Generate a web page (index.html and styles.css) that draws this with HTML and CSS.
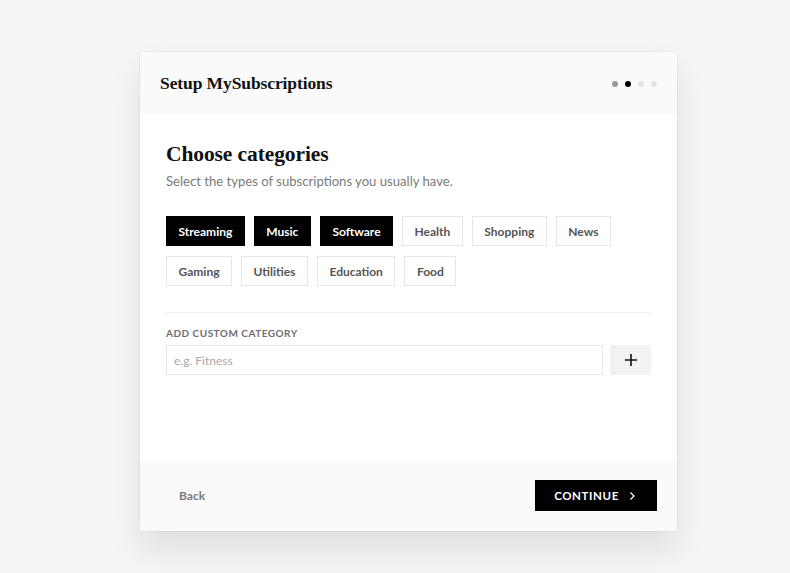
FILE: index.html
```html
<!DOCTYPE html>
<html lang="en">
<head>
<meta charset="utf-8">
<title>Setup MySubscriptions</title>
<link rel="stylesheet" href="styles.css">
</head>
<body>
<div class="card">
  <header class="card-head">
    <h1 class="brand">Setup MySubscriptions</h1>
    <div class="dots">
      <span class="dot done"></span>
      <span class="dot active"></span>
      <span class="dot"></span>
      <span class="dot"></span>
    </div>
  </header>
  <main class="card-body">
    <h2 class="title">Choose categories</h2>
    <p class="subtitle">Select the types of subscriptions you usually have.</p>
    <div class="chips">
      <button class="chip on">Streaming</button>
      <button class="chip on">Music</button>
      <button class="chip on">Software</button>
      <button class="chip">Health</button>
      <button class="chip">Shopping</button>
      <button class="chip">News</button>
      <button class="chip">Gaming</button>
      <button class="chip">Utilities</button>
      <button class="chip">Education</button>
      <button class="chip">Food</button>
    </div>
    <div class="custom">
      <label class="label" for="cat">ADD CUSTOM CATEGORY</label>
      <div class="add-row">
        <input id="cat" class="input" type="text" placeholder="e.g. Fitness">
        <button class="add" aria-label="Add">
          <svg width="14" height="14" viewBox="0 0 14 14"><path d="M7 1v12M1 7h12" stroke="#111" stroke-width="1.6" fill="none"/></svg>
        </button>
      </div>
    </div>
  </main>
  <footer class="card-foot">
    <button class="back">Back</button>
    <button class="continue">CONTINUE
      <svg width="7" height="10" viewBox="0 0 7 10"><path d="M1.5 1.5l3.5 3.5-3.5 3.5" stroke="#fff" stroke-width="1.3" fill="none"/></svg>
    </button>
  </footer>
</div>
</body>
</html>
```

FILE: styles.css
```css
* { box-sizing: border-box; }
html, body { margin: 0; padding: 0; }
body {
  background: #f5f5f5;
  font-family: "Lato", "Open Sans", sans-serif;
  color: #111;
  height: 573px;
  overflow: hidden;
}
.card {
  width: 537px;
  margin: 52px 0 0 140px;
  background: #fff;
  box-shadow: 0 18px 32px rgba(0,0,0,0.09), 0 0 0 1px rgba(0,0,0,0.04);
}
.card-head {
  height: 63px;
  background: #fafafa;
  display: flex;
  align-items: center;
  justify-content: space-between;
  padding: 0 20px;
}
.brand {
  margin: 0;
  font-family: "Liberation Serif", "DejaVu Serif", serif;
  font-weight: 700;
  font-size: 17.5px;
  letter-spacing: -0.1px;
}
.dots { display: flex; gap: 7px; }
.dot { width: 6px; height: 6px; border-radius: 50%; background: #e4e4e4; }
.dot.done { background: #9a9a9a; }
.dot.active { background: #000; }
.card-body {
  padding: 25px 26px 85px;
}
.title {
  margin: 0;
  font-family: "Liberation Serif", "DejaVu Serif", serif;
  font-weight: 700;
  font-size: 21.5px;
  line-height: 28px;
  letter-spacing: -0.1px;
}
.subtitle {
  margin: 3px 0 0;
  font-size: 13.1px;
  line-height: 20px;
  color: #7a7a7a;
}
.chips {
  margin-top: 25px;
  display: flex;
  flex-wrap: wrap;
  gap: 10px 9px;
}
.chip {
  height: 30px;
  padding: 0 11.5px;
  border: 1px solid #e6e6e6;
  background: #fff;
  color: #555;
  font-family: "Lato", "Open Sans", sans-serif;
  font-weight: 700;
  font-size: 12px;
}
.chip.on { background: #000; border-color: #000; color: #fff; }
.custom {
  margin-top: 26px;
  border-top: 1px solid #efefef;
  padding-top: 13px;
}
.label {
  display: block;
  font-size: 10px;
  font-weight: 700;
  letter-spacing: 0.5px;
  color: #6e6e6e;
  line-height: 14px;
  margin-bottom: 5px;
}
.add-row { display: flex; gap: 7px; }
.input {
  flex: 1;
  height: 30px;
  border: 1px solid #e6e6e6;
  padding: 0 7px;
  font-family: "Lato", "Open Sans", sans-serif;
  font-size: 12px;
  color: #333;
  outline: none;
}
.input::placeholder { color: #a8a8a8; }
.add {
  width: 41px;
  height: 30px;
  border: 0;
  background: #f2f2f2;
  display: flex;
  align-items: center;
  justify-content: center;
  padding: 0;
}
.card-foot {
  background: #fafafa;
  display: flex;
  justify-content: space-between;
  align-items: center;
  padding: 20px 20px 20px 26px;
}
.back {
  border: 0;
  background: transparent;
  padding: 0 13px;
  height: 31px;
  font-family: "Lato", "Open Sans", sans-serif;
  font-size: 12px;
  font-weight: 700;
  color: #7a7a7a;
}
.continue {
  width: 122px;
  height: 31px;
  border: 0;
  background: #000;
  color: #fff;
  font-family: "Lato", "Open Sans", sans-serif;
  font-size: 11.5px;
  font-weight: 700;
  letter-spacing: 0.6px;
  display: flex;
  align-items: center;
  justify-content: center;
  gap: 10px;
  padding: 0 2px 0 0;
}
```
